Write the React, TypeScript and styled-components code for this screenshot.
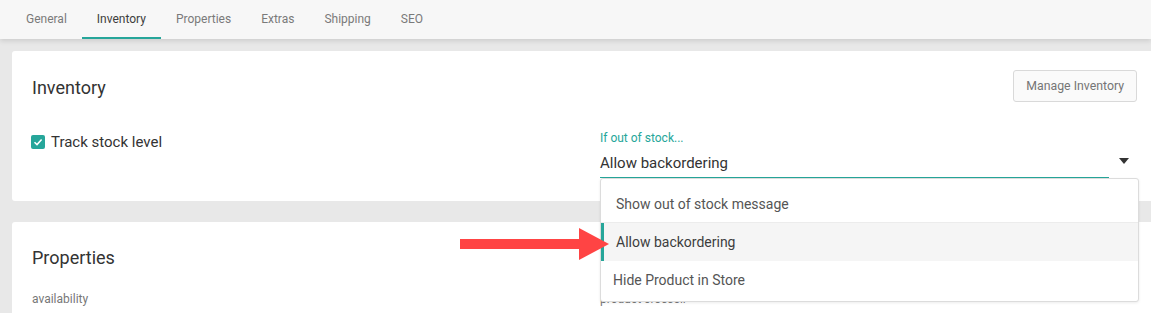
import React from 'react'
import styled, { createGlobalStyle } from 'styled-components'

const teal = '#26a69a'

const GlobalStyle = createGlobalStyle`
  html, body {
    margin: 0;
    padding: 0;
    background: #e8e8e8;
    font-family: Roboto, "Liberation Sans", Arial, sans-serif;
    overflow: hidden;
  }
`

const tabs = ['General', 'Inventory', 'Properties', 'Extras', 'Shipping', 'SEO']

const menuItems = [
  { label: 'Show out of stock message', indent: 15, active: false },
  { label: 'Allow backordering', indent: 12, active: true },
  { label: 'Hide Product in Store', indent: 12, active: false },
]

const App = () => {
  return (
    <>
      <GlobalStyle />
      <TabBar>
        {tabs.map((t) => (
          <Tab key={t} $active={t === 'Inventory'}>
            {t}
          </Tab>
        ))}
      </TabBar>
      <Content>
        <Card>
          <CardHeader>
            <CardTitle>Inventory</CardTitle>
            <Button>Manage Inventory</Button>
          </CardHeader>
          <FormRow>
            <CheckRow>
              <Checkbox>
                <svg width="10" height="10" viewBox="0 0 10 10">
                  <path d="M1.5 5.2 L4 7.6 L8.6 2.4" fill="none" stroke="#fff" strokeWidth="1.5" />
                </svg>
              </Checkbox>
              <CheckLabel>Track stock level</CheckLabel>
            </CheckRow>
            <Field>
              <FieldLabel>If out of stock...</FieldLabel>
              <SelectRow>
                <SelectValue>Allow backordering</SelectValue>
                <Caret />
              </SelectRow>
              <Menu>
                {menuItems.map((m) => (
                  <MenuItem key={m.label} $active={m.active} $indent={m.indent}>
                    {m.label}
                  </MenuItem>
                ))}
              </Menu>
            </Field>
          </FormRow>
        </Card>
        <Card $second>
          <CardHeader>
            <CardTitle>Properties</CardTitle>
          </CardHeader>
          <PropRow>
            <SmallLabel>availability</SmallLabel>
            <SmallLabel>product crossell</SmallLabel>
          </PropRow>
        </Card>
      </Content>
      <Arrow width="150" height="34" viewBox="0 0 150 34">
        <rect x="0" y="11" width="121" height="10" fill="#ff4444" />
        <polygon points="119,0 149,16 119,32" fill="#ff4444" />
      </Arrow>
    </>
  )
}

export default App

const TabBar = styled.div`
  position: relative;
  z-index: 2;
  display: flex;
  height: 39px;
  padding-left: 11px;
  background: #f7f7f7;
  box-shadow: 0 2px 5px rgba(0, 0, 0, 0.12);
`

const Tab = styled.div<{ $active?: boolean }>`
  display: flex;
  align-items: center;
  padding: 0 15px;
  font-size: 12px;
  color: ${(p) => (p.$active ? '#3d3d3d' : '#7a7a7a')};
  border-bottom: 2px solid ${(p) => (p.$active ? teal : 'transparent')};
  box-sizing: border-box;
`

const Content = styled.div`
  padding: 12px 0 0 12px;
`

const Card = styled.div<{ $second?: boolean }>`
  width: 1144px;
  box-sizing: border-box;
  background: #fff;
  border-radius: 3px;
  padding: 19px 20px 23px;
  margin-bottom: 21px;
  min-height: ${(p) => (p.$second ? '120px' : '150px')};
`

const CardHeader = styled.div`
  display: flex;
  justify-content: space-between;
  align-items: center;
  min-height: 31px;
`

const CardTitle = styled.h2`
  margin: 2px 0 0;
  font-size: 18px;
  font-weight: 400;
  color: #333;
`

const Button = styled.button`
  height: 32px;
  padding: 0 12px;
  font-family: inherit;
  font-size: 12.3px;
  color: #757575;
  background: #fafafa;
  border: 1px solid #d9d9d9;
  border-radius: 3px;
  margin-right: -1px;
`

const FormRow = styled.div`
  display: grid;
  grid-template-columns: 568px 536px;
  margin-top: 28px;
`

const CheckRow = styled.div`
  display: flex;
  align-items: center;
  gap: 6px;
  height: 24px;
  margin-left: -1px;
`

const Checkbox = styled.span`
  width: 14px;
  height: 14px;
  border-radius: 2px;
  background: ${teal};
  display: flex;
  align-items: center;
  justify-content: center;
`

const CheckLabel = styled.span`
  font-size: 15px;
  color: #333;
`

const Field = styled.div`
  position: relative;
`

const FieldLabel = styled.div`
  font-size: 12px;
  line-height: 16px;
  color: ${teal};
`

const SelectRow = styled.div`
  display: flex;
  align-items: center;
  height: 32px;
`

const SelectValue = styled.div`
  flex: 0 0 509px;
  height: 32px;
  line-height: 35px;
  box-sizing: border-box;
  border-bottom: 1px solid ${teal};
  font-size: 15px;
  color: #333;
`

const Caret = styled.span`
  margin-left: 10px;
  margin-top: -2px;
  width: 0;
  height: 0;
  border-left: 5px solid transparent;
  border-right: 5px solid transparent;
  border-top: 6px solid #333;
`

const Menu = styled.div`
  position: absolute;
  z-index: 3;
  left: 0;
  top: 48px;
  width: 539px;
  box-sizing: border-box;
  padding: 6px 0 2px;
  background: #fff;
  border: 1px solid #dcdcdc;
  border-radius: 3px;
  box-shadow: 0 1px 3px rgba(0, 0, 0, 0.08);
`

const MenuItem = styled.div<{ $active?: boolean; $indent: number }>`
  height: 38px;
  display: flex;
  align-items: center;
  box-sizing: border-box;
  padding-left: ${(p) => p.$indent}px;
  font-size: 14px;
  color: ${(p) => (p.$active ? '#3d3d3d' : '#555')};
  background: ${(p) => (p.$active ? '#f5f5f5' : '#fff')};
  border-left: ${(p) => (p.$active ? `3px solid ${teal}` : 'none')};
  &:first-child {
    border-bottom: 1px solid #ececec;
  }
`

const PropRow = styled.div`
  display: grid;
  grid-template-columns: 568px 536px;
  margin-top: 20px;
`

const SmallLabel = styled.div`
  font-size: 12px;
  color: #777;
`

const Arrow = styled.svg`
  position: absolute;
  left: 460px;
  top: 228px;
  z-index: 4;
`
